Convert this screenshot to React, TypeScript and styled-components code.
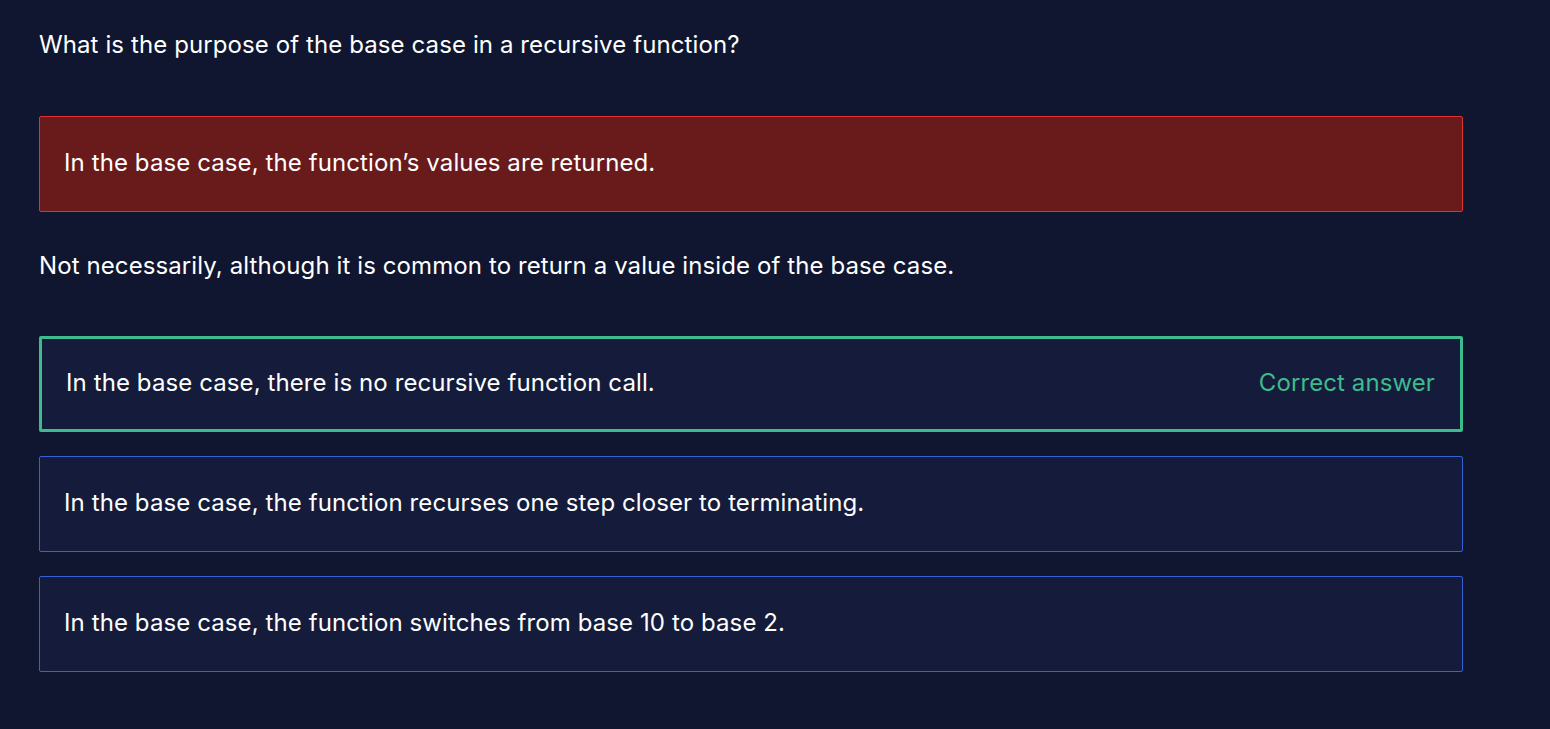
import styled, { createGlobalStyle } from 'styled-components';

const GlobalStyle = createGlobalStyle`
  html, body {
    margin: 0;
    padding: 0;
    background: #10162f;
  }
  body {
    font-family: Inter, "Noto Sans", sans-serif;
    color: #ffffff;
    -webkit-font-smoothing: antialiased;
  }
`;

type Variant = 'wrong' | 'correct' | 'default';

const Page = styled.main`
  min-height: 729px;
  box-sizing: border-box;
  padding: 29px 87px 40px 39px;
  display: flex;
  flex-direction: column;
`;

const Question = styled.h2`
  margin: 0 0 55px;
  font-size: 24px;
  font-weight: 400;
  line-height: 32px;
  letter-spacing: 0.1px;
`;

const Explanation = styled.p`
  margin: 38px 0 54px;
  font-size: 24px;
  line-height: 32px;
  letter-spacing: 0.1px;
`;

const AnswerList = styled.div`
  display: flex;
  flex-direction: column;
  gap: 24px;
`;

const palette: Record<Variant, { bg: string; border: string; width: number }> = {
  wrong: { bg: '#691a1b', border: '#e0302f', width: 1 },
  correct: { bg: '#151c3b', border: '#3dbb8c', width: 3 },
  default: { bg: '#151c3b', border: '#3560d6', width: 1 },
};

const Answer = styled.div<{ $variant: Variant }>`
  box-sizing: border-box;
  height: 96px;
  display: flex;
  align-items: center;
  justify-content: space-between;
  padding: 0 25px 2px 24px;
  border-radius: 2px;
  background: ${(p) => palette[p.$variant].bg};
  border: ${(p) => palette[p.$variant].width}px solid ${(p) => palette[p.$variant].border};
  font-size: 24px;
  line-height: 32px;
  letter-spacing: 0.1px;
`;

const Verdict = styled.span`
  color: #3dbb8c;
`;

const options = [
  'In the base case, there is no recursive function call.',
  'In the base case, the function recurses one step closer to terminating.',
  'In the base case, the function switches from base 10 to base 2.',
];

export default function App() {
  return (
    <Page>
      <GlobalStyle />
      <Question>What is the purpose of the base case in a recursive function?</Question>
      <Answer $variant="wrong">In the base case, the function’s values are returned.</Answer>
      <Explanation>
        Not necessarily, although it is common to return a value inside of the base case.
      </Explanation>
      <AnswerList>
        {options.map((text, i) => (
          <Answer key={text} $variant={i === 0 ? 'correct' : 'default'}>
            <span>{text}</span>
            {i === 0 && <Verdict>Correct answer</Verdict>}
          </Answer>
        ))}
      </AnswerList>
    </Page>
  );
}
